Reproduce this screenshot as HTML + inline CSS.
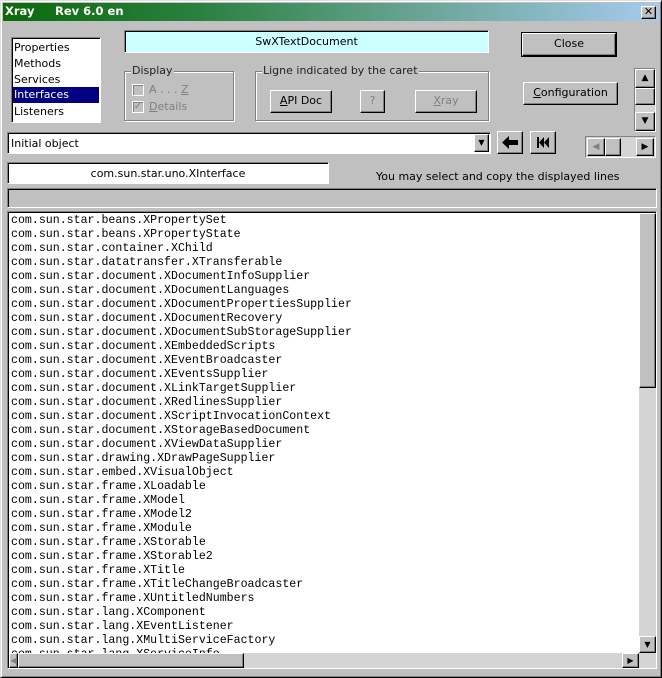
<!DOCTYPE html><html><head><style>
*{margin:0;padding:0;box-sizing:border-box}
body{width:662px;height:678px;background:#c0c0c0;position:relative;overflow:hidden;font-family:"DejaVu Sans","Liberation Sans",sans-serif;font-size:11px;color:#000}
.a{position:absolute}
.sunk{border:1px solid;border-color:#808080 #fff #fff #808080;box-shadow:inset 1px 1px 0 #000}
.btn{position:absolute;background:#c0c0c0;border:1px solid;border-color:#fff #000 #000 #fff;box-shadow:inset -1px -1px 0 #808080;text-align:center;font-size:11px}
.grp{position:absolute;border:1px solid #808080;box-shadow:1px 1px 0 #fff, inset 1px 1px 0 #fff}
.lg{position:absolute;top:-8px;left:6px;background:#c0c0c0;padding:0 1px;font-size:11px;color:#222}
.dis{color:#808080}
pre{font-family:"Liberation Mono",monospace;font-size:11.6px;line-height:14px}
</style></head><body>
<div class="a" style="left:0;top:0;width:662px;height:678px;border:1px solid;border-color:#dfdfdf #000 #000 #dfdfdf;box-shadow:inset 1px 1px 0 #fff,inset -1px -1px 0 #808080"></div>
<div class="a" style="left:3px;top:3px;width:656px;height:18px;background:linear-gradient(90deg,#0a6a0a 0%,#2a8040 30%,#5a9c80 55%,#a6caf0 100%)"></div>
<div class="a" style="left:5px;top:4px;color:#fff;font-weight:bold;font-size:11.5px">Xray</div>
<div class="a" style="left:55px;top:4px;color:#fff;font-weight:bold;font-size:11.5px">Rev 6.0 en</div>
<div class="btn" style="left:641px;top:6px;width:15px;height:13px;font-size:11px;line-height:10px;font-weight:bold">✕</div>

<div class="a sunk" style="left:11px;top:37px;width:90px;height:86px;background:#fff"></div>
<div class="a" style="left:14px;top:40px;line-height:16px;font-size:11px">Properties<br>Methods<br>Services</div>
<div class="a" style="left:13px;top:87px;width:86px;height:16px;background:#000080;color:#fff;padding-left:1px;line-height:16px">Interfaces</div>
<div class="a" style="left:14px;top:104px;line-height:16px">Listeners</div>

<div class="a sunk" style="left:124px;top:30px;width:365px;height:23px;background:#ccffff;text-align:center;line-height:22px">SwXTextDocument</div>
<div class="btn" style="left:522px;top:33px;width:94px;height:23px;line-height:20px;outline:1px solid #000">Close</div>

<div class="grp" style="left:124px;top:71px;width:110px;height:50px"><span class="lg">Display</span></div>
<div class="a" style="left:132px;top:84px;width:12px;height:12px;border:1px solid #fff;box-shadow:inset 1px 1px 0 #808080"></div>
<div class="a dis" style="left:149px;top:83px">A . . . <u>Z</u></div>
<div class="a" style="left:132px;top:101px;width:12px;height:12px;border:1px solid #fff;box-shadow:inset 1px 1px 0 #808080;color:#808080;font-size:10px;line-height:10px;text-align:center">✓</div>
<div class="a dis" style="left:149px;top:100px"><u>D</u>etails</div>

<div class="grp" style="left:255px;top:71px;width:234px;height:50px"><span class="lg">Ligne indicated by the caret</span></div>
<div class="btn" style="left:270px;top:90px;width:62px;height:23px;line-height:20px"><u>A</u>PI Doc</div>
<div class="btn dis" style="left:360px;top:90px;width:25px;height:23px;line-height:20px">?</div>
<div class="btn dis" style="left:415px;top:90px;width:62px;height:23px;line-height:20px"><u>X</u>ray</div>

<div class="btn" style="left:523px;top:82px;width:95px;height:23px;line-height:20px"><u>C</u>onfiguration</div>

<div class="a" style="left:634px;top:68px;width:22px;height:64px;background:#d4d4d4;border:1px solid;border-color:#808080 #fff #fff #808080"></div>
<div class="btn" style="left:635px;top:69px;width:20px;height:19px;font-size:9px;line-height:17px">▲</div>
<div class="btn" style="left:635px;top:88px;width:20px;height:17px"></div>
<div class="btn" style="left:635px;top:112px;width:20px;height:19px;font-size:9px;line-height:17px">▼</div>

<div class="a sunk" style="left:7px;top:132px;width:484px;height:22px;background:#fff;padding:4px 0 0 3px">Initial object</div>
<div class="btn" style="left:474px;top:134px;width:15px;height:18px;font-size:8px;line-height:16px">▼</div>
<div class="btn" style="left:497px;top:131px;width:26px;height:23px"><svg width="24" height="21" viewBox="0 0 24 21" style="position:absolute;left:0;top:0"><path d="M4 10.5 L11 4 L11 8 L20 8 L20 13 L11 13 L11 17 Z" fill="#000"/></svg></div>
<div class="btn" style="left:530px;top:131px;width:26px;height:23px"><svg width="24" height="21" viewBox="0 0 24 21" style="position:absolute;left:0;top:0"><rect x="6" y="5" width="2" height="11" fill="#000"/><path d="M8 10.5 L13 5 L13 16 Z M13 10.5 L18 5 L18 16 Z" fill="#000"/></svg></div>

<div class="a" style="left:585px;top:136px;width:71px;height:22px;background:#d4d4d4;border:1px solid;border-color:#808080 #fff #fff #808080"></div>
<div class="btn dis" style="left:587px;top:138px;width:18px;height:18px;font-size:9px;line-height:16px">◀</div>
<div class="btn" style="left:605px;top:138px;width:16px;height:18px"></div>
<div class="btn" style="left:636px;top:138px;width:18px;height:18px;font-size:9px;line-height:16px">▶</div>

<div class="a sunk" style="left:7px;top:162px;width:322px;height:22px;background:#fff;text-align:center;line-height:21px">com.sun.star.uno.XInterface</div>
<div class="a" style="left:376px;top:170px">You may select and copy the displayed lines</div>
<div class="a sunk" style="left:7px;top:188px;width:650px;height:20px"></div>

<div class="a sunk" style="left:7px;top:211px;width:650px;height:458px;background:#fff;overflow:hidden">
<pre style="position:absolute;left:3px;top:2px">com.sun.star.beans.XPropertySet
com.sun.star.beans.XPropertyState
com.sun.star.container.XChild
com.sun.star.datatransfer.XTransferable
com.sun.star.document.XDocumentInfoSupplier
com.sun.star.document.XDocumentLanguages
com.sun.star.document.XDocumentPropertiesSupplier
com.sun.star.document.XDocumentRecovery
com.sun.star.document.XDocumentSubStorageSupplier
com.sun.star.document.XEmbeddedScripts
com.sun.star.document.XEventBroadcaster
com.sun.star.document.XEventsSupplier
com.sun.star.document.XLinkTargetSupplier
com.sun.star.document.XRedlinesSupplier
com.sun.star.document.XScriptInvocationContext
com.sun.star.document.XStorageBasedDocument
com.sun.star.document.XViewDataSupplier
com.sun.star.drawing.XDrawPageSupplier
com.sun.star.embed.XVisualObject
com.sun.star.frame.XLoadable
com.sun.star.frame.XModel
com.sun.star.frame.XModel2
com.sun.star.frame.XModule
com.sun.star.frame.XStorable
com.sun.star.frame.XStorable2
com.sun.star.frame.XTitle
com.sun.star.frame.XTitleChangeBroadcaster
com.sun.star.frame.XUntitledNumbers
com.sun.star.lang.XComponent
com.sun.star.lang.XEventListener
com.sun.star.lang.XMultiServiceFactory
com.sun.star.lang.XServiceInfo</pre>
<div class="a" style="left:631px;top:1px;width:17px;height:440px;background:#d4d4d4"></div>
<div class="btn" style="left:631px;top:1px;width:17px;height:175px"></div>
<div class="btn" style="left:631px;top:424px;width:17px;height:17px;font-size:8px;line-height:15px">▼</div>
<div class="a" style="left:1px;top:441px;width:647px;height:16px;background:#d4d4d4"></div>
<div class="btn dis" style="left:1px;top:441px;width:9px;height:15px;font-size:8px;line-height:13px">◀</div>
<div class="btn" style="left:10px;top:441px;width:226px;height:15px"></div>
<div class="btn" style="left:614px;top:441px;width:17px;height:15px;font-size:8px;line-height:13px">▶</div>
</div>
</body></html>
